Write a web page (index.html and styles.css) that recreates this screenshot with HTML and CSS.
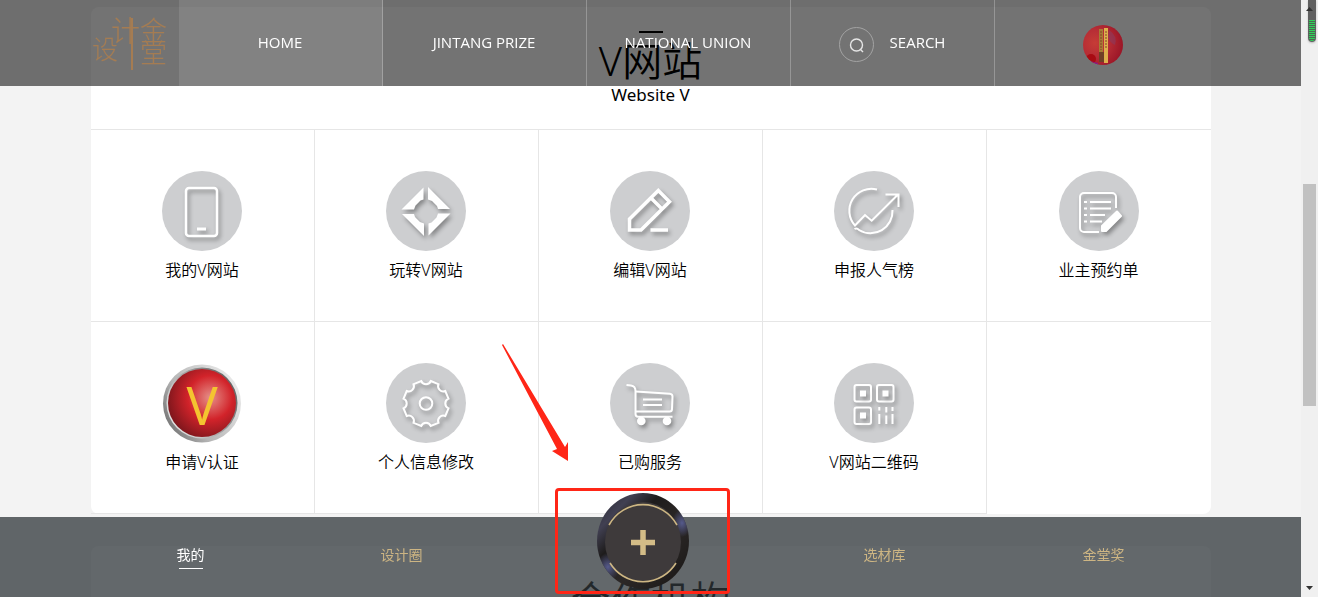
FILE: index.html
```html
<!DOCTYPE html>
<html lang="zh-CN">
<head>
  <meta charset="UTF-8">
  <title>V网站</title>
  <link rel="stylesheet" href="styles.css">
</head>
<body>
  <header class="top-bar">
    <div class="wrap top-inner">
      <a class="logo" href="#" aria-label="金堂设计">
        <svg width="80" height="60" viewBox="0 0 80 60">
          <text x="1" y="46" font-size="26">设</text>
          <text x="20" y="29" font-size="29">计</text>
          <text x="49" y="28" font-size="27">金</text>
          <text x="49" y="50" font-size="27">堂</text>
          <path d="M41 5V57" stroke="#a57c52" stroke-width="2"/>
        </svg>
      </a>
      <nav class="top-nav">
        <a class="active" href="#">HOME</a>
        <a href="#">JINTANG PRIZE</a>
        <a href="#">NATIONAL UNION</a>
        <a class="search" href="#">
          <svg width="35" height="35" viewBox="0 0 35 35" fill="none">
            <circle cx="17.5" cy="17.5" r="17" stroke="#a2a2a2"/>
            <circle cx="17.5" cy="18" r="6" stroke="#e6e6e6" stroke-width="1.4"/>
            <path d="M21.500 22.500L24 25" stroke="#e6e6e6" stroke-width="1.4"/>
          </svg>
          <span>SEARCH</span>
        </a>
      </nav>
      <a class="user" href="#" aria-label="user">
        <svg width="40" height="40" viewBox="0 0 40 40">
          <defs>
            <radialGradient id="face" cx=".3" cy=".45" r=".8">
              <stop offset="0" stop-color="#c63c36"/>
              <stop offset=".45" stop-color="#b52c35"/>
              <stop offset="1" stop-color="#930f22"/>
            </radialGradient>
            <clipPath id="round"><circle cx="20" cy="20" r="20"/></clipPath>
          </defs>
          <g clip-path="url(#round)">
            <rect width="40" height="40" fill="url(#face)"/>
            <path d="M26 5Q35 11 32 20Q27 18 25 12Z" fill="#8a3a5e" opacity=".6"/>
            <circle cx="8" cy="34" r="5" fill="#a80b12"/>
            <path d="M5 40L7 36L15 38V40Z" fill="#8c1687"/>
            <path d="M16 4H20V27H16Z" fill="#a87b35"/>
            <path d="M16 27H21V37H16Z" fill="#704027"/>
            <path d="M21 3H25V38H21Z" fill="#deb04d"/>
            <path d="M18 6V25M23 6V23" stroke="#83432a" stroke-dasharray="2 1"/>
          </g>
        </svg>
      </a>
    </div>
  </header>

  <main class="page">
    <section class="wrap panel">
      <div class="panel-head">
        <h2>V网站</h2>
        <p>Website V</p>
      </div>
      <ul class="menu">
        <li><a href="#">
          <svg class="icon" viewBox="0 0 80 80">
            <circle class="disc" cx="40" cy="40" r="40"/>
            <g class="line thick">
              <rect x="24" y="17" width="31" height="48" rx="3"/>
              <path d="M35 58H44" stroke-width="3"/>
            </g>
          </svg>
          <span>我的V网站</span>
        </a></li>
        <li><a href="#">
          <svg class="icon" viewBox="0 0 80 80">
            <circle class="disc" cx="40" cy="40" r="40"/>
            <g class="solid">
              <path d="M15.500 38.500L37.500 16.500V28.500L34.500 29.500L29.500 34.500L28 38.500Z"/>
              <path d="M15.500 38.500L37.500 16.500V28.500L34.500 29.500L29.500 34.500L28 38.500Z" transform="rotate(90 40 40.500)"/>
              <path d="M15.500 38.500L37.500 16.500V28.500L34.500 29.500L29.500 34.500L28 38.500Z" transform="rotate(180 40 40.500)"/>
              <path d="M15.500 38.500L37.500 16.500V28.500L34.500 29.500L29.500 34.500L28 38.500Z" transform="rotate(270 40 40.500)"/>
            </g>
          </svg>
          <span>玩转V网站</span>
        </a></li>
        <li><a href="#">
          <svg class="icon" viewBox="0 0 80 80">
            <circle class="disc" cx="40" cy="40" r="40"/>
            <g class="line heavy">
              <path d="M48.300 19.500L59.500 30.700L31 59H19.500V48ZM41 27L51 37M40.500 59H58"/>
            </g>
          </svg>
          <span>编辑V网站</span>
        </a></li>
        <li><a href="#">
          <svg class="icon" viewBox="0 0 80 80">
            <circle class="disc" cx="40" cy="40" r="40"/>
            <g class="line">
              <path d="M43 18.500A22 22 0 0 0 21 54.500L31 44L37.700 49.700L64 23.500M51.500 23.500H64.500V36"/>
              <path d="M58.500 39A22 22 0 0 1 25 59Q23 56.500 20.500 58"/>
            </g>
          </svg>
          <span>申报人气榜</span>
        </a></li>
        <li><a href="#">
          <svg class="icon" viewBox="0 0 80 80">
            <circle class="disc" cx="40" cy="40" r="40"/>
            <g class="line">
              <path d="M40 61H25A4 4 0 0 1 21 57V26A4 4 0 0 1 25 22H53A4 4 0 0 1 57 26V37"/>
              <path d="M25 31H28M31 31H52M25 37.500H28M31 37.500H52M25 44H28M31 44H46M25 50.500H28M31 50.500H43"/>
            </g>
            <path class="solid pen" d="M58 40.500L62 45L47 60H43V55Z"/>
          </svg>
          <span>业主预约单</span>
        </a></li>
        <li><a href="#">
          <svg class="icon" viewBox="0 0 80 80">
            <defs>
              <linearGradient id="rim" x1="0" y1=".8" x2="1" y2=".2">
                <stop offset="0" stop-color="#6d6d6d"/>
                <stop offset=".35" stop-color="#b5b5b5"/>
                <stop offset="1" stop-color="#eeeeee"/>
              </linearGradient>
              <linearGradient id="rim2" x1="0" y1=".8" x2="1" y2=".2">
                <stop offset="0" stop-color="#eeeeee"/>
                <stop offset="1" stop-color="#5c5c5c"/>
              </linearGradient>
              <radialGradient id="red" cx=".62" cy=".42" r=".65">
                <stop offset="0" stop-color="#e59089"/>
                <stop offset=".5" stop-color="#d2232a"/>
                <stop offset="1" stop-color="#7c161c"/>
              </radialGradient>
            </defs>
            <circle cx="40" cy="40.500" r="39" fill="url(#rim)"/>
            <circle cx="40" cy="40" r="35.500" fill="url(#rim2)"/>
            <circle cx="40" cy="40" r="34" fill="url(#red)"/>
            <text class="badge-v" x="40" y="62">V</text>
          </svg>
          <span>申请V认证</span>
        </a></li>
        <li><a href="#">
          <svg class="icon" viewBox="0 0 80 80">
            <circle class="disc" cx="40" cy="40" r="40"/>
            <g class="line" transform="translate(40 40.500)">
              <path d="M4.800 -22.500L12.500 -19.300A5.200 5.200 0 0 0 19.300 -12.500L22.500 -4.800A5.200 5.200 0 0 0 22.500 4.800L19.300 12.500A5.200 5.200 0 0 0 12.500 19.300L4.800 22.500A5.200 5.200 0 0 0 -4.800 22.500L-12.500 19.300A5.200 5.200 0 0 0 -19.300 12.500L-22.500 4.800A5.200 5.200 0 0 0 -22.500 -4.800L-19.300 -12.500A5.200 5.200 0 0 0 -12.500 -19.300L-4.800 -22.500A5.200 5.200 0 0 0 4.800 -22.500Z"/>
              <circle r="6.300"/>
            </g>
          </svg>
          <span>个人信息修改</span>
        </a></li>
        <li><a href="#">
          <svg class="icon" viewBox="0 0 80 80">
            <circle class="disc" cx="40" cy="40" r="40"/>
            <g class="line">
              <path d="M16.500 22L21 22.500Q25.500 23 25.500 28V51Q25.500 53.700 28 53.700H62.500"/>
              <path d="M26 28.500L60 30.700Q62.500 31 62.500 33.500L62 46Q62 48.500 59.500 48.500H26M33 36.500H52M33 42H52"/>
            </g>
            <g class="solid">
              <circle cx="31.300" cy="58" r="4.300"/>
              <circle cx="57" cy="58" r="4.300"/>
            </g>
          </svg>
          <span>已购服务</span>
        </a></li>
        <li><a href="#">
          <svg class="icon" viewBox="0 0 80 80">
            <circle class="disc" cx="40" cy="40" r="40"/>
            <g class="line">
              <rect x="20.500" y="22" width="16.500" height="16.500" rx="2"/>
              <rect x="43" y="22" width="16.500" height="16.500" rx="2"/>
              <rect x="20.500" y="44.500" width="16.500" height="16.500" rx="2"/>
              <path d="M45.300 44V47.500M45.300 51V61M52.300 44V49.500M52.300 52.500V61M58.500 44V48M58.500 51V61"/>
            </g>
            <path class="solid" d="M26 27.500H32V33.500H26ZM48.500 27.500H54.500V33.500H48.500ZM26 49.500H32V55.500H26Z"/>
          </svg>
          <span>V网站二维码</span>
        </a></li>
      </ul>
    </section>

    <section class="wrap panel">
      <div class="panel-head">
        <h2>合作机构</h2>
      </div>
    </section>
  </main>

  <nav class="bottom-bar">
    <div class="wrap bottom-inner">
      <a class="active" href="#">我的</a>
      <a href="#">设计圈</a>
      <button class="add" type="button" aria-label="add">
        <svg width="92" height="96" viewBox="0 0 92 96" fill="none">
          <defs>
            <linearGradient id="bezel" x1="0" y1="0" x2="1" y2="1">
              <stop offset="0" stop-color="#25232b"/>
              <stop offset=".2" stop-color="#414052"/>
              <stop offset=".35" stop-color="#1e1c1c"/>
              <stop offset=".6" stop-color="#2c2827"/>
              <stop offset="1" stop-color="#171514"/>
            </linearGradient>
            <radialGradient id="glow">
              <stop offset="0" stop-color="#555a8c"/>
              <stop offset="1" stop-color="#555a8c" stop-opacity="0"/>
            </radialGradient>
            <clipPath id="knob"><ellipse cx="46" cy="48" rx="46" ry="48"/></clipPath>
          </defs>
          <g clip-path="url(#knob)">
            <rect width="92" height="96" fill="url(#bezel)"/>
            <ellipse cx="85" cy="30" rx="10" ry="14" fill="url(#glow)"/>
            <ellipse cx="11" cy="74" rx="12" ry="14" fill="url(#glow)"/>
          </g>
          <ellipse cx="46" cy="49" rx="38" ry="40" fill="#3e3a3b"/>
          <path d="M12 32A39 40 0 0 1 80 32M13 70A39 40 0 0 0 79 70" stroke="#cdb683" stroke-width="1.600"/>
          <path d="M46 37V62M34 49.500H58" stroke="#d3bc87" stroke-width="5.500"/>
        </svg>
      </button>
      <a href="#">选材库</a>
      <a href="#">金堂奖</a>
    </div>
  </nav>

  <!-- arrow and frame pointing at the add button -->
  <div class="guide">
    <svg class="guide-arrow" width="70" height="120" viewBox="0 0 70 120">
      <path d="M3 2L65 105L68 100V119L52 109L57 107L2 3Z" fill="#ff2617"/>
    </svg>
    <div class="guide-frame"></div>
  </div>

  <div class="scrollbar">
    <svg class="arrow" width="7" height="4"><path d="M0 4L3.500 0L7 4Z"/></svg>
    <div class="track"><div class="thumb"></div></div>
    <svg class="arrow" width="7" height="4"><path d="M0 0L3.500 4L7 0Z"/></svg>
    <div class="meter"></div>
  </div>
</body>
</html>
```
FILE: styles.css
```css
* {
  box-sizing: border-box;
}

body {
  margin: 0;
  height: 100vh;
  overflow: hidden;
  background: #f3f3f3;
  color: #000;
  font-family: "Noto Sans", "Noto Sans CJK SC", sans-serif;
  font-size: 16px;
  font-weight: 350;
}

a {
  color: inherit;
  text-decoration: none;
}

.wrap {
  max-width: 1120px;
  margin: 0 auto;
}

/* top bar */
.top-bar {
  position: fixed;
  top: 0;
  left: 0;
  right: 17px;
  z-index: 2;
  background: rgba(0, 0, 0, 0.55);
}

.top-inner {
  display: flex;
  height: 86px;
}

.logo {
  width: 88px;
  padding-top: 13px;
}

.logo text {
  fill: #a57c52;
  font-family: "Noto Sans CJK SC", sans-serif;
  font-weight: 300;
}

.top-nav {
  display: flex;
}

.top-nav a {
  display: flex;
  align-items: center;
  justify-content: center;
  width: 204px;
  border-right: 1px solid rgba(255, 255, 255, 0.25);
  padding-bottom: 2px;
  color: #fff;
  font-family: "Open Sans", sans-serif;
  font-size: 15px;
  font-weight: 500;
}

.top-nav .active {
  background: rgba(255, 255, 255, 0.1);
}

.top-nav .search {
  gap: 16px;
}

.search svg {
  margin-top: 4px;
}

.user {
  flex: 1;
  padding-top: 4px;
  display: flex;
  align-items: center;
  justify-content: center;
}

/* panels */
.page {
  padding-top: 7px;
  margin-right: 17px;
}

.panel {
  margin-bottom: 32px;
  background: #fff;
  border-radius: 8px;
}

.panel-head {
  height: 122px;
  padding-top: 24px;
  text-align: center;
}

.panel-head::before {
  content: "";
  display: block;
  width: 24px;
  height: 2px;
  margin: 0 auto;
  background: #000;
}

.panel-head h2 {
  margin: 0;
  font-size: 40px;
  font-weight: 350;
  line-height: 56px;
}

.panel-head p {
  margin: 0;
  font-size: 17px;
  font-weight: 400;
  line-height: 12px;
}

.menu {
  display: grid;
  grid-template-columns: repeat(5, 1fr);
  margin: 0;
  padding: 0;
  list-style: none;
  border-top: 1px solid #e6e6e6;
}

.menu li {
  height: 192px;
  border-right: 1px solid #e6e6e6;
  border-bottom: 1px solid #e6e6e6;
}

.menu li:nth-child(5n) {
  border-right: none;
}

.menu a {
  display: flex;
  flex-direction: column;
  align-items: center;
  gap: 7px;
  padding-top: 41px;
  line-height: 24px;
}

.icon {
  width: 80px;
  height: 80px;
}

.disc {
  fill: #cdced0;
}

.line {
  fill: none;
  stroke: #fff;
  stroke-width: 2;
  filter: drop-shadow(2px 3px 2px rgba(0, 0, 0, 0.35));
}

.thick {
  stroke-width: 2.5;
}

.heavy {
  stroke-width: 3.5;
}

.solid {
  fill: #fff;
  filter: drop-shadow(2px 3px 2px rgba(0, 0, 0, 0.35));
}

.pen {
  stroke: #fff;
  stroke-width: 2;
  stroke-linejoin: round;
}

.badge-v {
  fill: #f4c430;
  font-size: 52px;
  font-weight: 400;
  text-anchor: middle;
}

/* bottom bar */
.bottom-bar {
  position: fixed;
  left: 0;
  right: 17px;
  bottom: 0;
  z-index: 2;
  background: rgba(47, 53, 58, 0.75);
}

.bottom-inner {
  display: grid;
  grid-template-columns: 200px 222px 260px 224px 1fr;
  justify-items: center;
  height: 80px;
  padding-top: 28px;
  color: #cdb583;
  font-size: 14px;
  font-weight: 400;
  line-height: 20px;
}

.bottom-inner .active {
  color: #fff;
}

.bottom-inner .active::after {
  content: "";
  display: block;
  width: 24px;
  height: 1px;
  margin: 3px auto 0;
  background: #fff;
}

.add {
  height: 96px;
  margin-top: -52px;
  padding: 0;
  border: none;
  background: none;
  cursor: pointer;
}

/* guide marks */
.guide {
  position: fixed;
  left: calc(50% - 159px);
  bottom: 3px;
  z-index: 3;
  width: 230px;
  height: 252px;
  pointer-events: none;
}

.guide-arrow {
  position: absolute;
  top: 0;
  left: 0;
}

.guide-frame {
  position: absolute;
  right: 0;
  bottom: 0;
  width: 175px;
  height: 106px;
  border: 3px solid #ff2617;
  border-radius: 4px;
}

/* scrollbar */
.scrollbar {
  position: fixed;
  top: 0;
  right: 0;
  bottom: 0;
  display: flex;
  flex-direction: column;
  align-items: center;
  width: 17px;
  padding: 7px 0;
  background: #f0f0f0;
}

.arrow {
  position: relative;
  z-index: 1;
  fill: #333;
}

.track {
  flex: 1;
  width: 13px;
  padding-top: 173px;
}

.thumb {
  height: 222px;
  background: #c1c1c1;
}

.meter {
  position: absolute;
  top: 0;
  right: 2px;
  width: 8px;
  height: 42px;
  border: 1px solid #606060;
  border-top: 20px solid #606060;
  border-radius: 0 0 4px 4px;
  background: repeating-linear-gradient(#2fd158 0 1px, #4d6653 1px 2px);
  box-shadow: 0 1px 2px #bbb;
}
```
